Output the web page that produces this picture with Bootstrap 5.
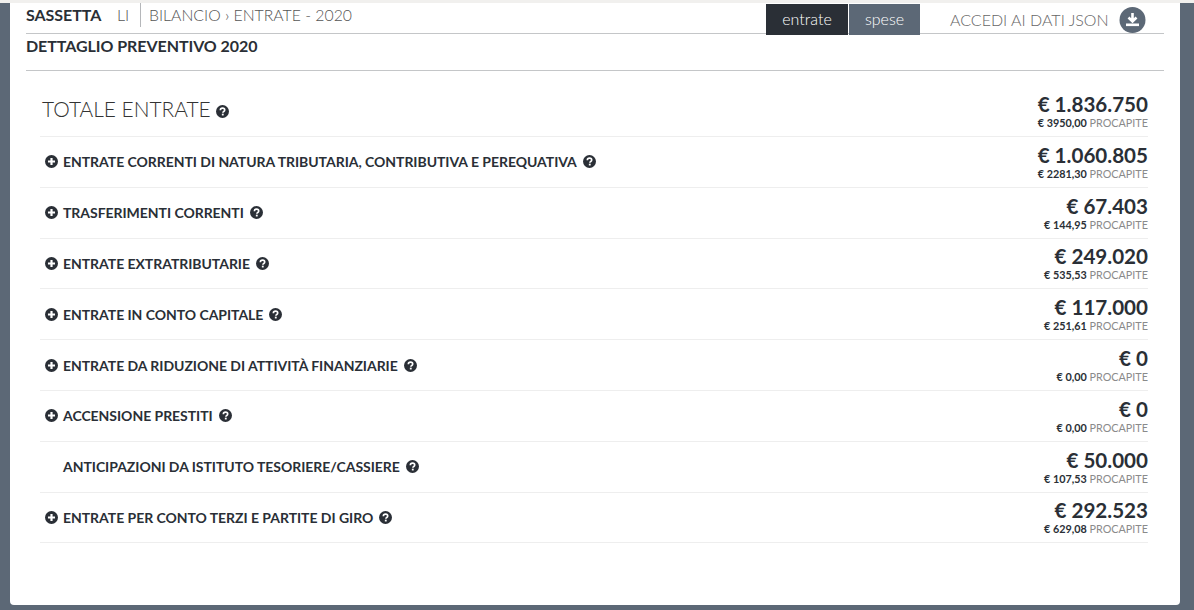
<!DOCTYPE html>
<html lang="it">
<head>
<meta charset="UTF-8">
<meta name="viewport" content="width=device-width, initial-scale=1.0">
<title>Bilancio Sassetta</title>
<link href="https://cdn.jsdelivr.net/npm/bootstrap@5.3.0/dist/css/bootstrap.min.css" rel="stylesheet">
<style>
body { background:#5c6876; font-family:Lato, sans-serif; color:#2a2f36; height:610px; overflow:hidden; border-top:3px solid #f1f0ee; }
.sheet { background:#fff; margin:0 14px 0 10px; height:602px; padding:0 16px; border-radius:0 0 4px 4px; }
.topbar { height:31px; border-bottom:1px solid #c4c6c8; }
.place { font-size:16px; font-weight:700; letter-spacing:-.05px; width:91px; margin-top:-6px; }
.prov { font-size:16px; font-weight:300; color:#555; width:23px; margin-top:-6px; }
.crumb { font-size:15.8px; font-weight:300; color:#555; border-left:1px solid #b5b7ba; padding-left:8px; height:24px; line-height:23px; margin-top:-6px; }
.tab-btn { height:31px; margin-top:1px; font-size:16px; font-weight:300; color:#fff; text-align:center; line-height:29px; }
.tab-on { width:82px; background:#2a2f36; }
.tab-off { width:71px; background:#5c6876; margin-left:1px; margin-right:30px; }
.json-link { font-size:16px; font-weight:300; color:#666; margin-right:18px; width:196px; }
.subhead { height:37px; border-bottom:1px solid #c4c6c8; font-size:16px; font-weight:700; line-height:23px; letter-spacing:-.05px; }
.voci { padding:0 16px 0 14px; margin-top:14px; }
.voce { height:50.8px; border-bottom:1px solid #eeeeee; padding-left:23px; padding-bottom:1px; }
.voce-top { height:52px; padding-left:2px; }
.voce-left { padding-top:1px; }
.voce-top .voce-left { padding-top:0; }
.voce-name { font-size:14px; font-weight:700; letter-spacing:-.04px; }
.voce-total { font-size:20.9px; font-weight:300; color:#333; margin-bottom:3px; }
.amount { font-size:20.6px; font-weight:700; line-height:24px; }
.percap { font-size:10.8px; line-height:12px; margin-top:1px; color:#8a8a8a; font-weight:400; }
.percap b { color:#2a2f36; }
.ico-plus { margin-left:-18px; margin-right:5px; }
.ico-help { margin-left:6px; }
.voce-top .ico-help { margin-top:3px; margin-left:5px; }
</style>
</head>
<body>
<svg width="0" height="0" class="d-block">
  <defs>
    <symbol id="i-help" viewBox="0 0 24 24">
      <circle cx="12" cy="12" r="12" fill="#2a2f36"/>
      <path d="M8 9.500c0-2.400 1.800-3.700 4.100-3.700 2.300 0 4 1.300 4 3.300 0 2.900-3.400 2.700-3.400 5" fill="none" stroke="#fff" stroke-width="3"/>
      <rect x="10.800" y="16" width="3.400" height="3.300" fill="#fff"/>
    </symbol>
    <symbol id="i-plus" viewBox="0 0 24 24">
      <circle cx="12" cy="12" r="12" fill="#2a2f36"/>
      <path d="M5.500 12h13M12 5.500v13" stroke="#fff" stroke-width="4"/>
    </symbol>
  </defs>
</svg>
<div class="sheet">
  <div class="topbar d-flex align-items-center">
    <span class="place">SASSETTA</span>
    <span class="prov">LI</span>
    <span class="crumb">BILANCIO › ENTRATE - 2020</span>
    <div class="ms-auto d-flex align-items-start align-self-start">
      <div class="tab-btn tab-on">entrate</div>
      <div class="tab-btn tab-off">spese</div>
      <div class="json-link d-flex justify-content-between align-items-center pt-1">
        <span>ACCEDI AI DATI JSON</span>
        <svg width="27" height="26" viewBox="0 0 27 26"><circle cx="13.500" cy="13" r="13" fill="#5c6876"/><path d="M13.500 6v8M9.500 10.500l4 4 4-4" fill="none" stroke="#fff" stroke-width="2.600"/><rect x="7" y="16.500" width="13" height="2.600" fill="#fff"/></svg>
      </div>
    </div>
  </div>
  <div class="subhead">DETTAGLIO PREVENTIVO 2020</div>
  <div class="voci">
    <div class="voce voce-top d-flex align-items-center justify-content-between">
      <div class="voce-left d-flex align-items-center"><span class="voce-total">TOTALE ENTRATE</span><svg class="ico-help" width="13" height="13"><use href="#i-help"/></svg></div>
      <div class="text-end"><div class="amount">€ 1.836.750</div><div class="percap"><b>€ 3950,00</b> PROCAPITE</div></div>
    </div>
    <div class="voce d-flex align-items-center justify-content-between">
      <div class="voce-left d-flex align-items-center"><svg class="ico-plus" width="13" height="13"><use href="#i-plus"/></svg><span class="voce-name">ENTRATE CORRENTI DI NATURA TRIBUTARIA, CONTRIBUTIVA E PEREQUATIVA</span><svg class="ico-help" width="13" height="13"><use href="#i-help"/></svg></div>
      <div class="text-end"><div class="amount">€ 1.060.805</div><div class="percap"><b>€ 2281,30</b> PROCAPITE</div></div>
    </div>
    <div class="voce d-flex align-items-center justify-content-between">
      <div class="voce-left d-flex align-items-center"><svg class="ico-plus" width="13" height="13"><use href="#i-plus"/></svg><span class="voce-name">TRASFERIMENTI CORRENTI</span><svg class="ico-help" width="13" height="13"><use href="#i-help"/></svg></div>
      <div class="text-end"><div class="amount">€ 67.403</div><div class="percap"><b>€ 144,95</b> PROCAPITE</div></div>
    </div>
    <div class="voce d-flex align-items-center justify-content-between">
      <div class="voce-left d-flex align-items-center"><svg class="ico-plus" width="13" height="13"><use href="#i-plus"/></svg><span class="voce-name">ENTRATE EXTRATRIBUTARIE</span><svg class="ico-help" width="13" height="13"><use href="#i-help"/></svg></div>
      <div class="text-end"><div class="amount">€ 249.020</div><div class="percap"><b>€ 535,53</b> PROCAPITE</div></div>
    </div>
    <div class="voce d-flex align-items-center justify-content-between">
      <div class="voce-left d-flex align-items-center"><svg class="ico-plus" width="13" height="13"><use href="#i-plus"/></svg><span class="voce-name">ENTRATE IN CONTO CAPITALE</span><svg class="ico-help" width="13" height="13"><use href="#i-help"/></svg></div>
      <div class="text-end"><div class="amount">€ 117.000</div><div class="percap"><b>€ 251,61</b> PROCAPITE</div></div>
    </div>
    <div class="voce d-flex align-items-center justify-content-between">
      <div class="voce-left d-flex align-items-center"><svg class="ico-plus" width="13" height="13"><use href="#i-plus"/></svg><span class="voce-name">ENTRATE DA RIDUZIONE DI ATTIVITÀ FINANZIARIE</span><svg class="ico-help" width="13" height="13"><use href="#i-help"/></svg></div>
      <div class="text-end"><div class="amount">€ 0</div><div class="percap"><b>€ 0,00</b> PROCAPITE</div></div>
    </div>
    <div class="voce d-flex align-items-center justify-content-between">
      <div class="voce-left d-flex align-items-center"><svg class="ico-plus" width="13" height="13"><use href="#i-plus"/></svg><span class="voce-name">ACCENSIONE PRESTITI</span><svg class="ico-help" width="13" height="13"><use href="#i-help"/></svg></div>
      <div class="text-end"><div class="amount">€ 0</div><div class="percap"><b>€ 0,00</b> PROCAPITE</div></div>
    </div>
    <div class="voce d-flex align-items-center justify-content-between">
      <div class="voce-left d-flex align-items-center"><span class="voce-name">ANTICIPAZIONI DA ISTITUTO TESORIERE/CASSIERE</span><svg class="ico-help" width="13" height="13"><use href="#i-help"/></svg></div>
      <div class="text-end"><div class="amount">€ 50.000</div><div class="percap"><b>€ 107,53</b> PROCAPITE</div></div>
    </div>
    <div class="voce d-flex align-items-center justify-content-between">
      <div class="voce-left d-flex align-items-center"><svg class="ico-plus" width="13" height="13"><use href="#i-plus"/></svg><span class="voce-name">ENTRATE PER CONTO TERZI E PARTITE DI GIRO</span><svg class="ico-help" width="13" height="13"><use href="#i-help"/></svg></div>
      <div class="text-end"><div class="amount">€ 292.523</div><div class="percap"><b>€ 629,08</b> PROCAPITE</div></div>
    </div>
  </div>
</div>
<script src="https://cdn.jsdelivr.net/npm/bootstrap@5.3.0/dist/js/bootstrap.bundle.min.js"></script>
</body>
</html>
